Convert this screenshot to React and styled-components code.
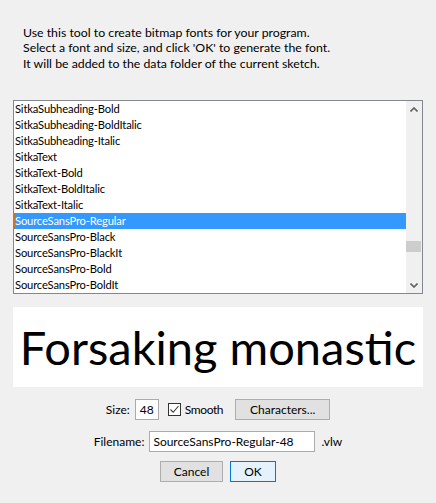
import React from "react";
import styled, { createGlobalStyle } from "styled-components";

const Global = createGlobalStyle`
  html, body { margin: 0; padding: 0; background: #f0f0f0; }
  body { font-family: "Lato", "Liberation Sans", sans-serif; font-size: 12px; color: #000; }
  * { box-sizing: border-box; }
`;

const Dialog = styled.div`
  width: 436px;
  height: 503px;
  display: flex;
  flex-direction: column;
  background: #f0f0f0;
`;

const Instructions = styled.div`
  padding: 24.5px 0 0 23px;
  line-height: 15.5px;
  font-size: 12.3px;
`;

const ListBox = styled.div`
  margin: 29px 13px 0 13px;
  height: 194px;
  border: 1px solid #828790;
  background: #fff;
  display: flex;
`;

const Rows = styled.div`
  flex: 1;
  display: flex;
  flex-direction: column;
  font-size: 11.2px;
  letter-spacing: -0.15px;
`;

const Row = styled.div`
  height: 16px;
  padding-left: ${(p) => (p.$selected ? 0 : 1)}px;
  white-space: nowrap;
  background: ${(p) => (p.$selected ? "#3399ff" : "transparent")};
  color: ${(p) => (p.$selected ? "#fff" : "#000")};
  border: ${(p) => (p.$selected ? "1px dotted #c9772f" : "none")};
  line-height: ${(p) => (p.$selected ? "13px" : "15px")};
`;

const ScrollBar = styled.div`
  width: 16px;
  background: #f0f0f0;
  display: flex;
  flex-direction: column;
`;

const ArrowBtn = styled.div`
  height: 16px;
  display: flex;
  align-items: center;
  justify-content: center;
`;

const Track = styled.div`
  flex: 1;
  display: flex;
  flex-direction: column;
`;

const Thumb = styled.div`
  width: 15px;
  height: 11px;
  background: #cdcdcd;
`;

const Preview = styled.div`
  margin: 13px 13px 0 13px;
  height: 80px;
  background: #fff;
  padding-top: 16px;
  text-align: center;
  font-family: "Lato", "Open Sans", sans-serif;
  font-size: 47px;
  line-height: 48px;
  color: #000;
  white-space: nowrap;
  overflow: hidden;
`;

const ControlRow = styled.div`
  display: flex;
  align-items: center;
  justify-content: center;
  margin-top: ${(p) => p.$mt}px;
  height: 21px;
`;

const Label = styled.span`
  margin-left: ${(p) => p.$ml || 0}px;
  min-width: ${(p) => p.$w || 0}px;
  white-space: nowrap;
`;

const TextField = styled.div`
  width: ${(p) => p.$w}px;
  height: 21px;
  margin-left: ${(p) => p.$ml || 0}px;
  border: 1px solid #ababab;
  background: #fff;
  padding-left: ${(p) => p.$pl || 3}px;
  line-height: 19px;
  white-space: nowrap;
`;

const CheckGroup = styled.label`
  display: flex;
  align-items: center;
  gap: 4px;
  margin-left: ${(p) => p.$ml || 0}px;
  letter-spacing: -0.4px;
`;

const CheckBox = styled.span`
  width: 13px;
  height: 13px;
  border: 1px solid #333;
  background: #fff;
  display: flex;
  align-items: center;
  justify-content: center;
`;

const Button = styled.div`
  width: ${(p) => p.$w}px;
  height: 21px;
  margin-left: ${(p) => p.$ml || 0}px;
  background: ${(p) => (p.$default ? "#e5f1fb" : "#e1e1e1")};
  border: 1px solid ${(p) => (p.$default ? "#0078d7" : "#adadad")};
  display: flex;
  align-items: center;
  justify-content: center;
  white-space: nowrap;
`;

const fonts = [
  "SitkaSubheading-Bold",
  "SitkaSubheading-BoldItalic",
  "SitkaSubheading-Italic",
  "SitkaText",
  "SitkaText-Bold",
  "SitkaText-BoldItalic",
  "SitkaText-Italic",
  "SourceSansPro-Regular",
  "SourceSansPro-Black",
  "SourceSansPro-BlackIt",
  "SourceSansPro-Bold",
  "SourceSansPro-BoldIt",
];

const Chevron = ({ up }) => (
  <svg width="8" height="5" viewBox="0 0 8 5">
    <path
      d={up ? "M0.5 4.5 L4 1 L7.5 4.5" : "M0.5 0.5 L4 4 L7.5 0.5"}
      fill="none"
      stroke="#606060"
      strokeWidth="1.6"
    />
  </svg>
);

export default function App() {
  const thumbOffset = 124;
  return (
    <>
      <Global />
      <Dialog>
        <Instructions>
          Use this tool to create bitmap fonts for your program.
          <br />
          Select a font and size, and click 'OK' to generate the font.
          <br />
          It will be added to the data folder of the current sketch.
        </Instructions>
        <ListBox>
          <Rows>
            {fonts.map((f) => (
              <Row key={f} $selected={f === "SourceSansPro-Regular"}>
                {f}
              </Row>
            ))}
          </Rows>
          <ScrollBar>
            <ArrowBtn>
              <Chevron up />
            </ArrowBtn>
            <Track>
              <Thumb style={{ marginTop: thumbOffset }} />
            </Track>
            <ArrowBtn>
              <Chevron />
            </ArrowBtn>
          </ScrollBar>
        </ListBox>
        <Preview>Forsaking monastic</Preview>
        <ControlRow $mt={12}>
          <Label>Size:</Label>
          <TextField $w={24} $ml={5} $pl={4}>48</TextField>
          <CheckGroup $ml={9}>
            <CheckBox>
              <svg width="11" height="11" viewBox="0 0 11 11">
                <path d="M1.5 5.5 L4.2 8.3 L9.5 2" fill="none" stroke="#333" strokeWidth="1.1" />
              </svg>
            </CheckBox>
            Smooth
          </CheckGroup>
          <Button $w={95} $ml={12}>Characters...</Button>
        </ControlRow>
        <ControlRow $mt={11}>
          <Label $w={46}>Filename:</Label>
          <TextField $w={166} $ml={5}>SourceSansPro-Regular-48</TextField>
          <Label $ml={6}>.vlw</Label>
        </ControlRow>
        <ControlRow $mt={9}>
          <Button $w={63}>Cancel</Button>
          <Button $w={46} $ml={7} $default>OK</Button>
        </ControlRow>
      </Dialog>
    </>
  );
}
